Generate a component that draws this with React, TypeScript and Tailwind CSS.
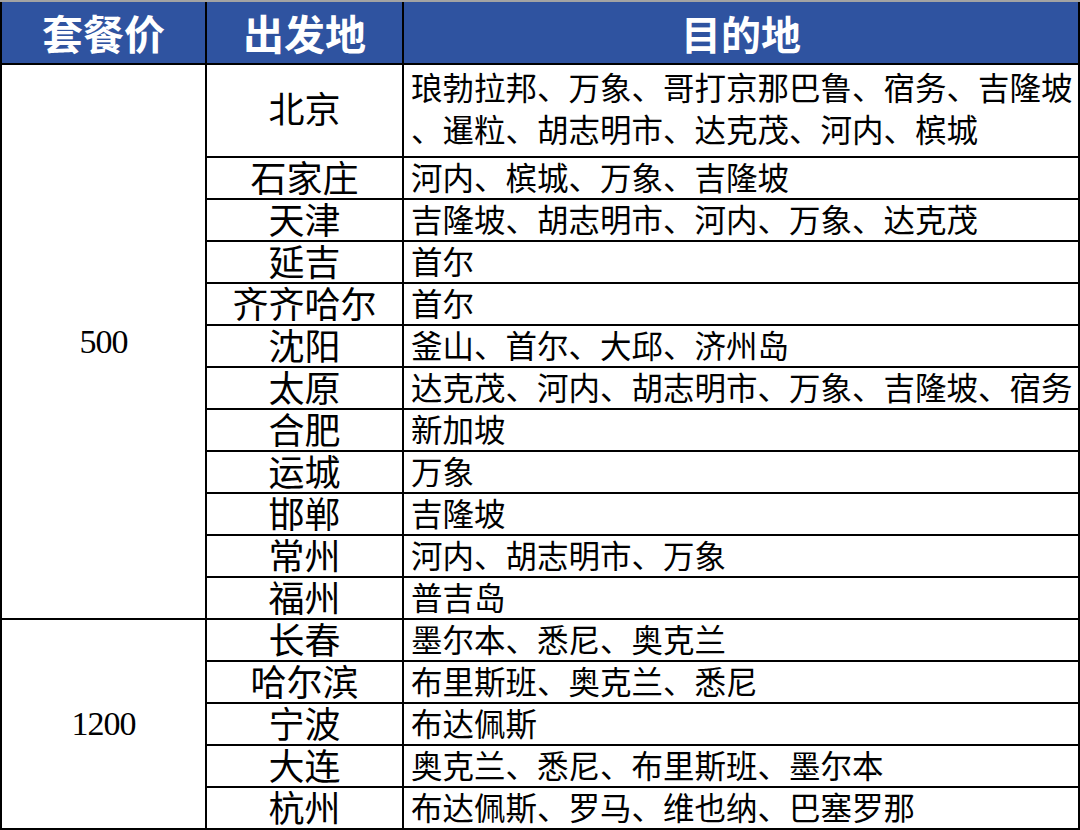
import React from 'react';

interface Row {
  city: string;
  dest: string[];
}

const group500: Row[] = [
  { city: '北京', dest: ['琅勃拉邦、万象、哥打京那巴鲁、宿务、吉隆坡', '、暹粒、胡志明市、达克茂、河内、槟城'] },
  { city: '石家庄', dest: ['河内、槟城、万象、吉隆坡'] },
  { city: '天津', dest: ['吉隆坡、胡志明市、河内、万象、达克茂'] },
  { city: '延吉', dest: ['首尔'] },
  { city: '齐齐哈尔', dest: ['首尔'] },
  { city: '沈阳', dest: ['釜山、首尔、大邱、济州岛'] },
  { city: '太原', dest: ['达克茂、河内、胡志明市、万象、吉隆坡、宿务'] },
  { city: '合肥', dest: ['新加坡'] },
  { city: '运城', dest: ['万象'] },
  { city: '邯郸', dest: ['吉隆坡'] },
  { city: '常州', dest: ['河内、胡志明市、万象'] },
  { city: '福州', dest: ['普吉岛'] },
];

const group1200: Row[] = [
  { city: '长春', dest: ['墨尔本、悉尼、奥克兰'] },
  { city: '哈尔滨', dest: ['布里斯班、奥克兰、悉尼'] },
  { city: '宁波', dest: ['布达佩斯'] },
  { city: '大连', dest: ['奥克兰、悉尼、布里斯班、墨尔本'] },
  { city: '杭州', dest: ['布达佩斯、罗马、维也纳、巴塞罗那'] },
];

const body = { fontFamily: '"Liberation Serif", "Noto Sans CJK SC", serif' };
const head = { fontFamily: '"Noto Sans CJK SC", "Noto Sans", sans-serif' };

function CityCell({ city, center }: { city: string; center?: boolean }) {
  return (
    <div className={`bg-white flex justify-center text-black ${center ? 'items-center' : 'items-end'}`}>
      <span className={`text-[36px] ${center ? 'leading-none' : 'leading-[38px] -mb-[1px]'}`} style={body}>
        {city}
      </span>
    </div>
  );
}

function DestCell({ dest }: { dest: string[] }) {
  if (dest.length > 1) {
    return (
      <div className="bg-white flex flex-col justify-center pl-[7px] text-black">
        {dest.map((line) => (
          <span key={line} className="text-[31.5px] leading-[42px] whitespace-nowrap" style={body}>
            {line}
          </span>
        ))}
      </div>
    );
  }
  return (
    <div className="bg-white flex items-end pl-[7px] text-black">
      <span className="text-[31.5px] leading-[37px] whitespace-nowrap" style={body}>
        {dest[0]}
      </span>
    </div>
  );
}

export default function App() {
  return (
    <div className="w-[1080px] h-[830px] bg-white">
      <div className="grid grid-cols-[203px_195px_674px] grid-rows-[61px_91px_repeat(16,40px)] gap-[2px] bg-black border-t-2 border-[#a3a3a3] px-[2px] pb-[2px] h-[830px]">
        <div className="bg-[#2f53a0] flex items-center justify-center">
          <span className="text-white text-[41px] font-bold leading-none" style={head}>套餐价</span>
        </div>
        <div className="bg-[#2f53a0] flex items-center justify-center">
          <span className="text-white text-[41px] font-bold leading-none" style={head}>出发地</span>
        </div>
        <div className="bg-[#2f53a0] flex items-center justify-center">
          <span className="text-white text-[40px] font-bold leading-none" style={head}>目的地</span>
        </div>

        <div className="bg-white row-span-12 flex items-center justify-center">
          <span className="text-[34px] leading-none tracking-[-1px] text-black" style={body}>500</span>
        </div>
        {group500.map((r, i) => (
          <React.Fragment key={r.city}>
            <CityCell city={r.city} center={i === 0} />
            <DestCell dest={r.dest} />
          </React.Fragment>
        ))}

        <div className="bg-white row-span-5 flex items-center justify-center">
          <span className="text-[34px] leading-none tracking-[-1px] text-black" style={body}>1200</span>
        </div>
        {group1200.map((r) => (
          <React.Fragment key={r.city}>
            <CityCell city={r.city} />
            <DestCell dest={r.dest} />
          </React.Fragment>
        ))}
      </div>
    </div>
  );
}
